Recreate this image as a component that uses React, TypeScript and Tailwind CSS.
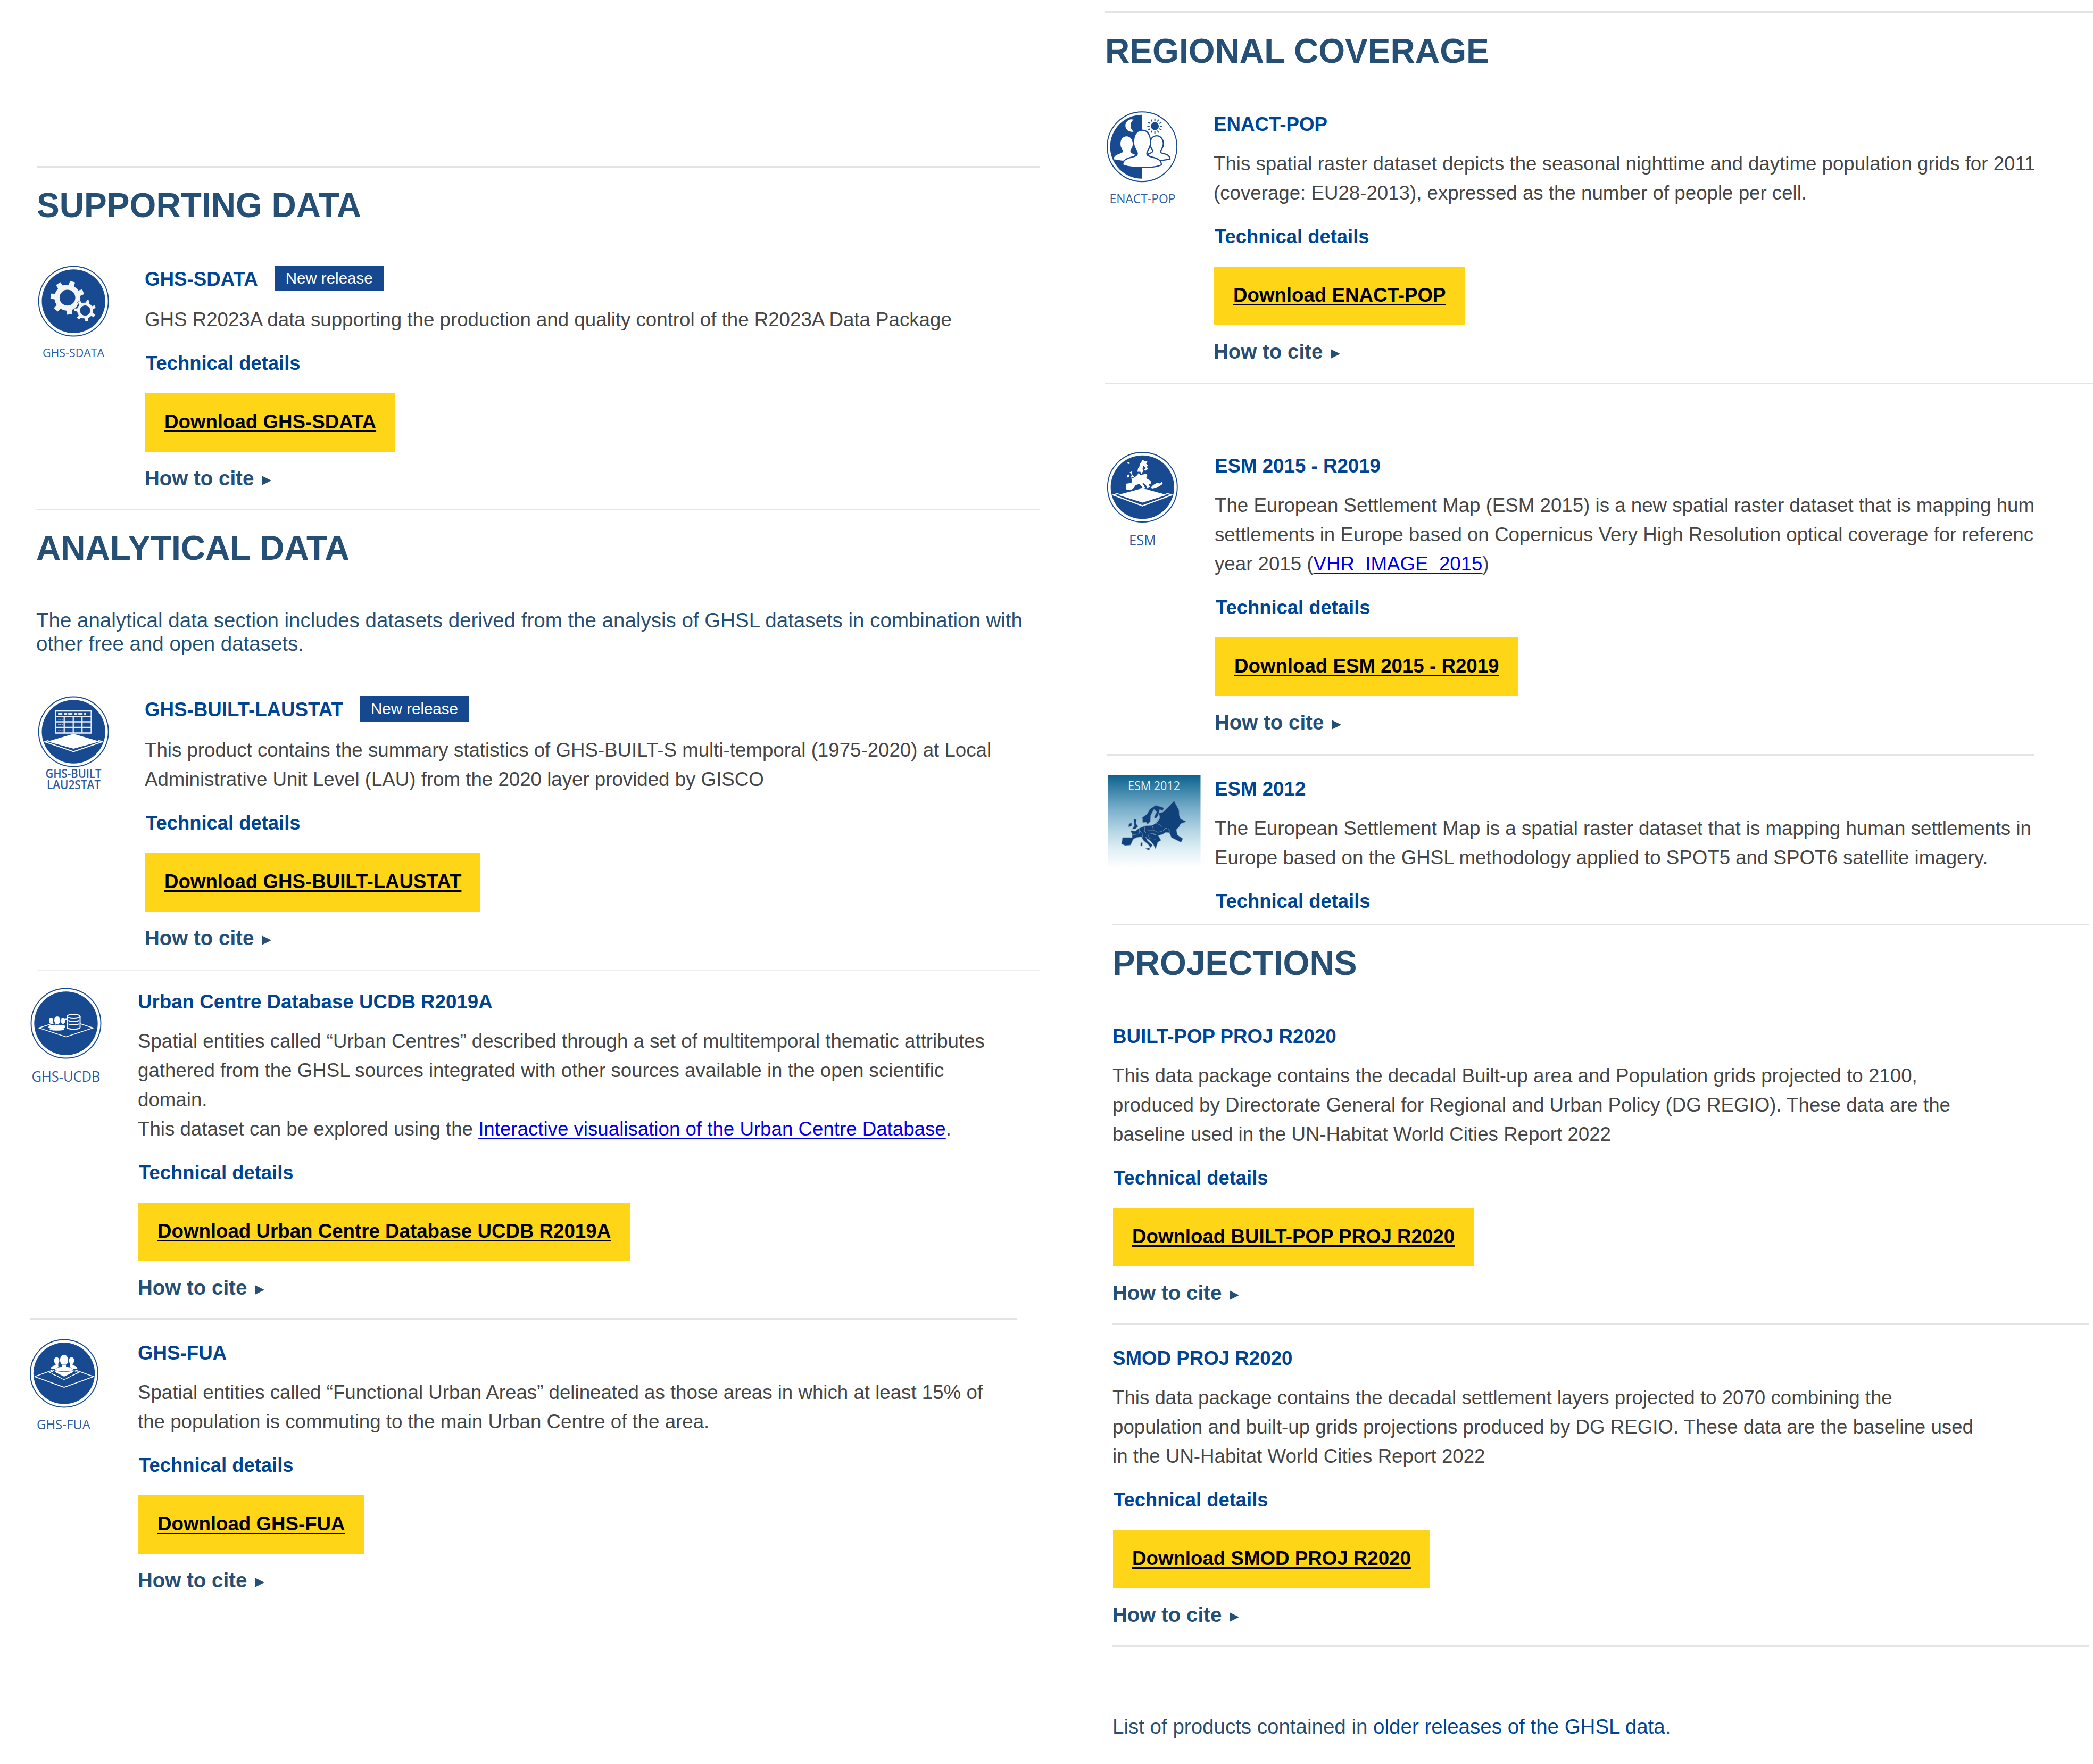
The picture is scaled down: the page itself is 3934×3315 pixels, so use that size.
import type { ReactNode } from "react";

const BLUE = "#174a91";
const LABEL = "#2f5c9f";
const LABEL_FONT = '"Open Sans", "Noto Sans", sans-serif';

/* ---------- page pieces ---------- */

function Rule({ className = "" }: { className?: string }) {
  return <hr className={`h-[3px] border-0 bg-[#e4e4e4] ${className}`} />;
}

function Heading({ children, className = "" }: { children: ReactNode; className?: string }) {
  return (
    <h2 className={`text-[64.1px] leading-[80px] font-bold whitespace-nowrap text-[#264f75] ${className}`}>
      {children}
    </h2>
  );
}

type EntryProps = {
  title: string;
  lines: ReactNode[];
  download?: boolean;
  isNew?: boolean;
  icon?: ReactNode;
  className?: string;
};

function Entry({ title, lines, download = true, isNew = false, icon, className = "" }: EntryProps) {
  return (
    <article className={`flex items-start ${className}`}>
      {icon && <div className="w-[203px] shrink-0">{icon}</div>}
      <div className="min-w-0 grow">
        <div className="flex h-[55px] items-start">
          <h3 className="text-[36.7px] leading-[55px] font-bold whitespace-nowrap text-[#004494]">{title}</h3>
          {isNew && (
            <span className="mt-[2px] ml-[32px] h-[48px] w-[204px] bg-[#164890] text-center text-[29.5px] leading-[47px] whitespace-nowrap text-white">
              New release
            </span>
          )}
        </div>
        <div
          className={`overflow-hidden text-[36.68px] leading-[55px] whitespace-nowrap text-[#464646] ${isNew ? "mt-[21px]" : "mt-[19px]"}`}
        >
          {lines.map((line, i) => (
            <p key={i}>{line}</p>
          ))}
        </div>
        <p className="mt-[27px] ml-[2px] text-[36.4px] leading-[55px] font-bold text-[#004494]">Technical details</p>
        {download && (
          <>
            <a className="mt-[29px] ml-px flex h-[110px] w-fit bg-[#ffd617] px-[36px] text-[36.7px] leading-[108px] font-bold whitespace-nowrap text-black underline decoration-[2.5px] underline-offset-[4px] [text-decoration-skip-ink:none]">
              Download {title}
            </a>
            <p className="mt-[22px] -mb-px flex items-center text-[38.5px] leading-[55px] font-bold text-[#264f75]">
              How to cite
              <svg width="18" height="18" viewBox="0 0 18 18" className="mt-[9px] ml-[15px]">
                <path d="M0 0 18 9 0 18Z" fill="#264f75" />
              </svg>
            </p>
          </>
        )}
      </div>
    </article>
  );
}

function InlineLink({ children }: { children: ReactNode }) {
  return (
    <a className="text-[#0000ee] underline decoration-[2.5px] underline-offset-[4px] [text-decoration-skip-ink:none]">
      {children}
    </a>
  );
}

/* ---------- round product icons ---------- */

type BadgeProps = {
  cx?: number;
  cy?: number;
  r?: number;
  filled?: boolean;
  labels: { text: string; x: number; y: number; w: number; size: number; weight?: number }[];
  children: ReactNode;
};

function RoundIcon({ cx = 69.2, cy = 69, r = 66, filled = true, labels, children }: BadgeProps) {
  return (
    <svg width="150" height="190" viewBox="0 0 150 190" className="block overflow-visible">
      <g transform={`translate(${cx} ${cy})`}>
        <circle r={r - 0.5} fill="#fff" stroke={BLUE} strokeWidth="1.9" />
        {filled && <circle r={r - 6.3} fill={BLUE} />}
        {children}
      </g>
      {labels.map((l) => (
        <text
          key={l.text}
          x={l.x}
          y={l.y}
          textLength={l.w}
          lengthAdjust="spacingAndGlyphs"
          fontSize={l.size}
          fontWeight={l.weight ?? 400}
          fontFamily={LABEL_FONT}
          fill={LABEL}
        >
          {l.text}
        </text>
      ))}
    </svg>
  );
}

function gearPath(teeth: number, outer: number, inner: number, hole: number, startDeg: number) {
  const step = (Math.PI * 2) / teeth;
  const start = (startDeg * Math.PI) / 180;
  const pt = (rad: number, a: number) => `${(rad * Math.cos(a)).toFixed(2)} ${(rad * Math.sin(a)).toFixed(2)}`;
  let d = "";
  for (let i = 0; i < teeth; i++) {
    const a = start + i * step;
    d += `${i ? "L" : "M"}${pt(inner, a - step * 0.24)}L${pt(outer, a - step * 0.17)}L${pt(outer, a + step * 0.17)}L${pt(inner, a + step * 0.24)}`;
    d += `A${inner} ${inner} 0 0 1 ${pt(inner, a + step * 0.76)}`;
  }
  return `${d}ZM${hole} 0A${hole} ${hole} 0 1 0 ${-hole} 0A${hole} ${hole} 0 1 0 ${hole} 0Z`;
}

function SdataIcon() {
  return (
    <RoundIcon labels={[{ text: "GHS-SDATA", x: 11, y: 174, w: 116, size: 22.5 }]}>
      <path transform="translate(-11.5 -6.6)" d={gearPath(7, 32, 24.5, 14.8, -72)} fill="#f4f4f4" fillRule="evenodd" />
      <circle cx="21.8" cy="17.6" r="18" fill={BLUE} />
      <path
        transform="translate(21.8 17.6)"
        d={gearPath(7, 21, 15.5, 9.2, -73)}
        fill="#f4f4f4"
        fillRule="evenodd"
        stroke={BLUE}
        strokeWidth="1"
      />
    </RoundIcon>
  );
}

function LaustatIcon() {
  return (
    <RoundIcon
      labels={[
        { text: "GHS-BUILT", x: 16.5, y: 155.5, w: 105, size: 22.5, weight: 600 },
        { text: "LAU2STAT", x: 19, y: 176.5, w: 101, size: 22.5, weight: 600 },
      ]}
    >
      <rect x="-33.5" y="-39" width="67" height="41.5" fill="none" stroke="#e8eef6" strokeWidth="2.6" />
      <path d="M-29 -33.5H23" stroke="#e8eef6" strokeWidth="4" strokeDasharray="8 3 6 2" />
      <path d="M-33 -28.2H33M-33 -18.5H33M-33 -8.2H33M-17.5 -28V2M-.5 -28V2M16 -28V2" stroke="#e8eef6" strokeWidth="2.3" />
      <path d="M-29 -23.2H-20M-29 -13.2H-20M-29 -3.2H-20" stroke="#9fb5d6" strokeWidth="1.6" strokeDasharray="2.5 1" />
      <path d="M0 4 49 18.5 0 32 -49 18.5Z" fill="#fff" />
      <path d="M-47 16.5 -54 19 0 37.5 54 19 47 16.5" fill="none" stroke="#fff" strokeWidth="1.9" />
    </RoundIcon>
  );
}

function UcdbIcon() {
  return (
    <RoundIcon cx={68} cy={68} labels={[{ text: "GHS-UCDB", x: 3.5, y: 178, w: 129, size: 27.5 }]}>
      <path d="M-51 8.8 0 -8 51 8.8 0 25.5Z" fill="none" stroke="#fff" strokeWidth="1.6" />
      <g fill="#fff">
        <ellipse cx="-28" cy="-4.5" rx="4" ry="5.5" />
        <ellipse cx="-5.5" cy="-4.5" rx="4" ry="5.5" />
        <path d="M-33 8Q-33 3.5-27 3H-6Q-1 3.5-1 8L-5 10H-29Z" />
        <ellipse cx="-16.5" cy="-5.5" rx="6" ry="8" stroke={BLUE} strokeWidth="1" />
        <path d="M-31 12.5Q-31 6-19.5 4V0H-13.5V4Q-3 6-3 12.5-17-9-31 12.5M-31 12.5Q-17 15-3 12.5L-5 7H-29Z" />
      </g>
      <g fill={BLUE} stroke="#fff" strokeWidth="2">
        <path d="M2 -13V7.5C2 12.5 26.5 12.5 26.5 7.5V-13" />
        <ellipse cx="14.2" cy="-13" rx="12.2" ry="4" />
        <path d="M4.5 -5.5C7 -2.5 21.5 -2.5 24 -5.5M4.5 .8C7 3.8 21.5 3.8 24 .8" fill="none" />
      </g>
    </RoundIcon>
  );
}

function FuaIcon() {
  return (
    <RoundIcon cx={64.5} cy={66} r={64} labels={[{ text: "GHS-FUA", x: 13, y: 170.5, w: 101, size: 26 }]}>
      <path d="M-55.5 6 -22 -6M22 -6 55.5 6 0 26 -55.5 6" fill="none" stroke="#fff" strokeWidth="1.7" />
      <path d="M-27 -1.5 0 11.5 27 -1.5 18 -6H-18Z" fill="none" stroke="#fff" strokeWidth="1.8" strokeDasharray="3 .8" />
      <path d="M-18 -3 0 6 18 -3 12 -7H-12Z" fill="#fff" />
      <g fill="#fff">
        <ellipse cx="-14" cy="-24" rx="5" ry="6.5" />
        <ellipse cx="14" cy="-24" rx="5" ry="6.5" />
        <path d="M-25 -10Q-24 -14-16 -15.5V-19H-11V-14L-8 -9H-24ZM25 -10Q24 -14 16 -15.5V-19H11V-14L8 -9H24Z" />
        <ellipse cx="0" cy="-25" rx="8.2" ry="10.5" stroke={BLUE} strokeWidth="1" />
        <path d="M-4 -17V-13Q-17 -11-18 -5.5 0 -1 18 -5.5 17 -11 4 -13V-17Z" stroke={BLUE} strokeWidth=".8" />
      </g>
    </RoundIcon>
  );
}

function EnactIcon() {
  const rays = Array.from({ length: 12 }, (_, i) => i * 30);
  return (
    <RoundIcon cx={68.6} cy={69.7} filled={false} labels={[{ text: "ENACT-POP", x: 7.5, y: 175.5, w: 124, size: 24.5 }]}>
      <path d="M0 -60A60 60 0 0 0 0 60Z" fill={BLUE} />
      <path d="M-16 -51A11.8 11.8 0 1 0 -16 -28.5 14 14 0 0 1 -16 -51Z" fill="#fff" />
      <circle cx="24" cy="-38.7" r="7.5" fill={BLUE} />
      {rays.map((a) => (
        <path key={a} d="M0 -9.8V-14.2" transform={`translate(24 -38.7) rotate(${a})`} stroke={BLUE} strokeWidth="1.9" />
      ))}
      <g fill="#fff" stroke={BLUE} strokeWidth="2.3" strokeLinejoin="round">
        <path
          d="M-29 -19.5C-37 -19.5-41 -13-40.5 -4-40 3-36 5-36 8.5-36 14-52 12-53.5 23.5L-38 26H-14V14C-20 13-22 11-22 8-22 5-17.5 2-17.5 -5-17.5 -13-22 -19.5-29 -19.5Z"
          stroke="none"
        />
        <path d="M27.5 -20.5C35 -20.5 40 -14 40 -5 40 3 34.5 6 34.5 10 34.5 14 52 11 52.5 23.5L36 26 12 22V13C18 12 20.5 10 20.5 7 16 2 15 -2 15 -5 15 -14 20 -20.5 27.5 -20.5Z" />
        <path d="M0 -31C-11 -31-16 -21-16 -8-16 3-9 7-9 13-9 22-36 17-36.5 34-22 41 22 41 36.5 34 36 17 9 22 9 13 9 7 16 3 16 -8 16 -21 11 -31 0 -31Z" />
      </g>
    </RoundIcon>
  );
}

function EsmIcon() {
  return (
    <RoundIcon cx={67.3} cy={67.5} labels={[{ text: "ESM", x: 42, y: 177, w: 51, size: 27.5 }]}>
      <path d="M0 2 46 14.5 0 29 -46 14.5Z" fill="#fff" />
      <path d="M-45 11.5 -55 14.5 0 35 55 14.5 45 11.5" fill="none" stroke="#fff" strokeWidth="2.2" />
      <g fill="#fff">
        <path d="M-9.5 -29 -8 -36 -6 -38 -5 -43 .5 -51.5 4 -49 9.5 -49 7 -44 10.5 -41 8 -38 11 -34.7 6 -31 3.5 -33 6 -37 2 -40 0 -34 2 -31 -2 -25 -4 -29Z" />
        <path d="M-24 -28 -19 -30 -20 -25 -15 -19 -22 -18 -20 -23ZM-28.5 -23 -24.5 -24 -25 -19 -29 -18ZM-29 -46 -25 -47 -23 -44.5 -27 -43.5Z" />
        <path d="M-21 -16 -14 -19 -9.5 -23 -7 -27 -4 -23 7 -25 9 -22 7 -17 15.5 -12 16 -7 12 -5 14 -1 9 3 7 -3 3.5 -7 0 -8 5 1 2 6 -1 -1 -6 -6 -13 -4 -17 3 -24 5.5 -31 4 -31 -6.5 -21 -8 -19 -12Z" />
        <path d="M15.5 1 20 -4 27 -8 33 -7 37.5 -11 38 -6 32 -2 25 2 18 3.5Z" />
        <path d="M-14 6 0 3 14 5 0 12Z" />
      </g>
    </RoundIcon>
  );
}

function Esm2012Icon() {
  return (
    <svg width="177" height="177" viewBox="0 0 177 177" className="block">
      <defs>
        <linearGradient id="esmSky" x1="0" y1="0" x2="0" y2="1">
          <stop offset="0" stopColor="#0d628d" />
          <stop offset=".14" stopColor="#3580a6" />
          <stop offset=".36" stopColor="#78aecb" />
          <stop offset=".6" stopColor="#b4d6e4" />
          <stop offset=".8" stopColor="#e0eff6" />
          <stop offset="1" stopColor="#fff" />
        </linearGradient>
      </defs>
      <rect x="2" y="1.5" width="174.5" height="174.5" fill="url(#esmSky)" />
      <text x="40" y="29.5" textLength="98" lengthAdjust="spacingAndGlyphs" fontSize="24.5" fontFamily={LABEL_FONT} fill="#e6f1f6">
        ESM 2012
      </text>
      <g transform="translate(2 1)" fill="#0f427a" stroke="#8190b3" strokeWidth=".8" strokeLinejoin="round">
        <path d="M125 48.5 128 55 134 66 134.5 76 137 83 148 88 137 92 134 98 129 103 131 113 141 120 138 127 120 118 116 109 109 108 103 112 95 114 100 123 94 127 90 139 86 131 80 124 73 119 71 116 75 124 84 132 81 137 76 131 67 123 63 116 54 118 48 121 43 132 33 133 26 130 28 118 46 118 46 111 43 105 52 106 58 101 63 99 70 96 84 95 90 91 95 87 98 80 96 72 104 70 110 64 119 55Z" />
        <path d="M66 90 65 80 74 74 79 65 90 57 106 62 103 68 98 65 95 76 91 82 87 80 92 70 87 65 81 76 80 88 75 93 72 89Z" />
        <path d="M49 83 54 84 53 91 57 97 53 101 46 102 50 96ZM40 92 45 90 45 96 39 98ZM71 139 79 137 78 142ZM62 128 65 127 65 134 62 134Z" />
        <path
          d="M58 102 66 112 65 118M70 97 69 106 75 112 86 110 90 113M84 96 86 104 94 108 103 106 109 100 116 103 116 109M91 91 98 94 103 100M75 112 79 120 90 121M90 91 94 84 98 82M86 104 76 104M48 121 54 118M95 114 86 112M60 101 59 111 46 113"
          fill="none"
        />
      </g>
    </svg>
  );
}

/* ---------- page ---------- */

export default function App() {
  return (
    <main className="grid h-[3315px] w-[3934px] grid-cols-[1967px_1967px] items-start overflow-hidden bg-white font-['Liberation_Sans',Arial,sans-serif]">
      <div className="pt-[312px]">
        <div className="ml-[69px] w-[1885px]">
          <Rule />
          <Heading className="mt-[31px]">SUPPORTING DATA</Heading>
          <Entry
            className="mt-[71px]"
            icon={<SdataIcon />}
            title="GHS-SDATA"
            isNew
            lines={["GHS R2023A data supporting the production and quality control of the R2023A Data Package"]}
          />
          <Rule className="mt-[31px]" />
          <Heading className="mt-[31px] -ml-px">ANALYTICAL DATA</Heading>
          <p className="mt-[74px] -ml-px text-[38.5px] leading-[44px] whitespace-nowrap text-[#264f75]">
            The analytical data section includes datasets derived from the analysis of GHSL datasets in combination with
            <br />
            other free and open datasets.
          </p>
          <Entry
            className="mt-[74px]"
            icon={<LaustatIcon />}
            title="GHS-BUILT-LAUSTAT"
            isNew
            lines={[
              "This product contains the summary statistics of GHS-BUILT-S multi-temporal (1975-2020) at Local",
              "Administrative Unit Level (LAU) from the 2020 layer provided by GISCO",
            ]}
          />
          <hr className="mt-[33px] h-[2px] border-0 bg-[#efefef]" />
        </div>
        <div className="ml-[56px] w-[1856px]">
          <Entry
            className="mt-[31px]"
            icon={<UcdbIcon />}
            title="Urban Centre Database UCDB R2019A"
            lines={[
              "Spatial entities called “Urban Centres” described through a set of multitemporal thematic attributes",
              "gathered from the GHSL sources integrated with other sources available in the open scientific",
              "domain.",
              <>
                This dataset can be explored using the{" "}
                <InlineLink>Interactive visualisation of the Urban Centre Database</InlineLink>.
              </>,
            ]}
          />
          <Rule className="mt-[31px]" />
          <Entry
            className="mt-[35px]"
            icon={<FuaIcon />}
            title="GHS-FUA"
            lines={[
              "Spatial entities called “Functional Urban Areas” delineated as those areas in which at least 15% of",
              "the population is commuting to the main Urban Centre of the area.",
            ]}
          />
        </div>
      </div>

      <div className="pt-[21px]">
        <div className="ml-[110px]">
          <Rule />
          <Heading className="mt-[32px]">REGIONAL COVERAGE</Heading>
          <Entry
            className="mt-[70px] ml-px"
            icon={<EnactIcon />}
            title="ENACT-POP"
            lines={[
              "This spatial raster dataset depicts the seasonal nighttime and daytime population grids for 2011",
              "(coverage: EU28-2013), expressed as the number of people per cell.",
            ]}
          />
          <Rule className="mt-[32px]" />
        </div>
        <div className="ml-[113px] w-[1743px]">
          <Entry
            className="mt-[126px]"
            icon={<EsmIcon />}
            title="ESM 2015 - R2019"
            lines={[
              "The European Settlement Map (ESM 2015) is a new spatial raster dataset that is mapping hum",
              "settlements in Europe based on Copernicus Very High Resolution optical coverage for referenc",
              <>
                year 2015 (<InlineLink>VHR_IMAGE_2015</InlineLink>)
              </>,
            ]}
          />
          <Rule className="mt-[33px]" />
          <Entry
            className="mt-[35px]"
            icon={<Esm2012Icon />}
            title="ESM 2012"
            download={false}
            lines={[
              "The European Settlement Map is a spatial raster dataset that is mapping human settlements in",
              "Europe based on the GHSL methodology applied to SPOT5 and SPOT6 satellite imagery.",
            ]}
          />
        </div>
        <div className="ml-[124px] w-[1836px]">
          <Rule className="mt-[15px]" />
          <Heading className="mt-[31px]">PROJECTIONS</Heading>
          <Entry
            className="mt-[70px]"
            title="BUILT-POP PROJ R2020"
            lines={[
              "This data package contains the decadal Built-up area and Population grids projected to 2100,",
              "produced by Directorate General for Regional and Urban Policy (DG REGIO). These data are the",
              "baseline used in the UN-Habitat World Cities Report 2022",
            ]}
          />
          <Rule className="mt-[31px]" />
          <Entry
            className="mt-[35px]"
            title="SMOD PROJ R2020"
            lines={[
              "This data package contains the decadal settlement layers projected to 2070 combining the",
              "population and built-up grids projections produced by DG REGIO. These data are the baseline used",
              "in the UN-Habitat World Cities Report 2022",
            ]}
          />
          <Rule className="mt-[31px]" />
          <p className="mt-[122px] text-[38.5px] leading-[55px] whitespace-nowrap text-[#264f75]">
            List of products contained in <a className="text-[#004494]">older releases of the GHSL data</a>.
          </p>
        </div>
      </div>
    </main>
  );
}
